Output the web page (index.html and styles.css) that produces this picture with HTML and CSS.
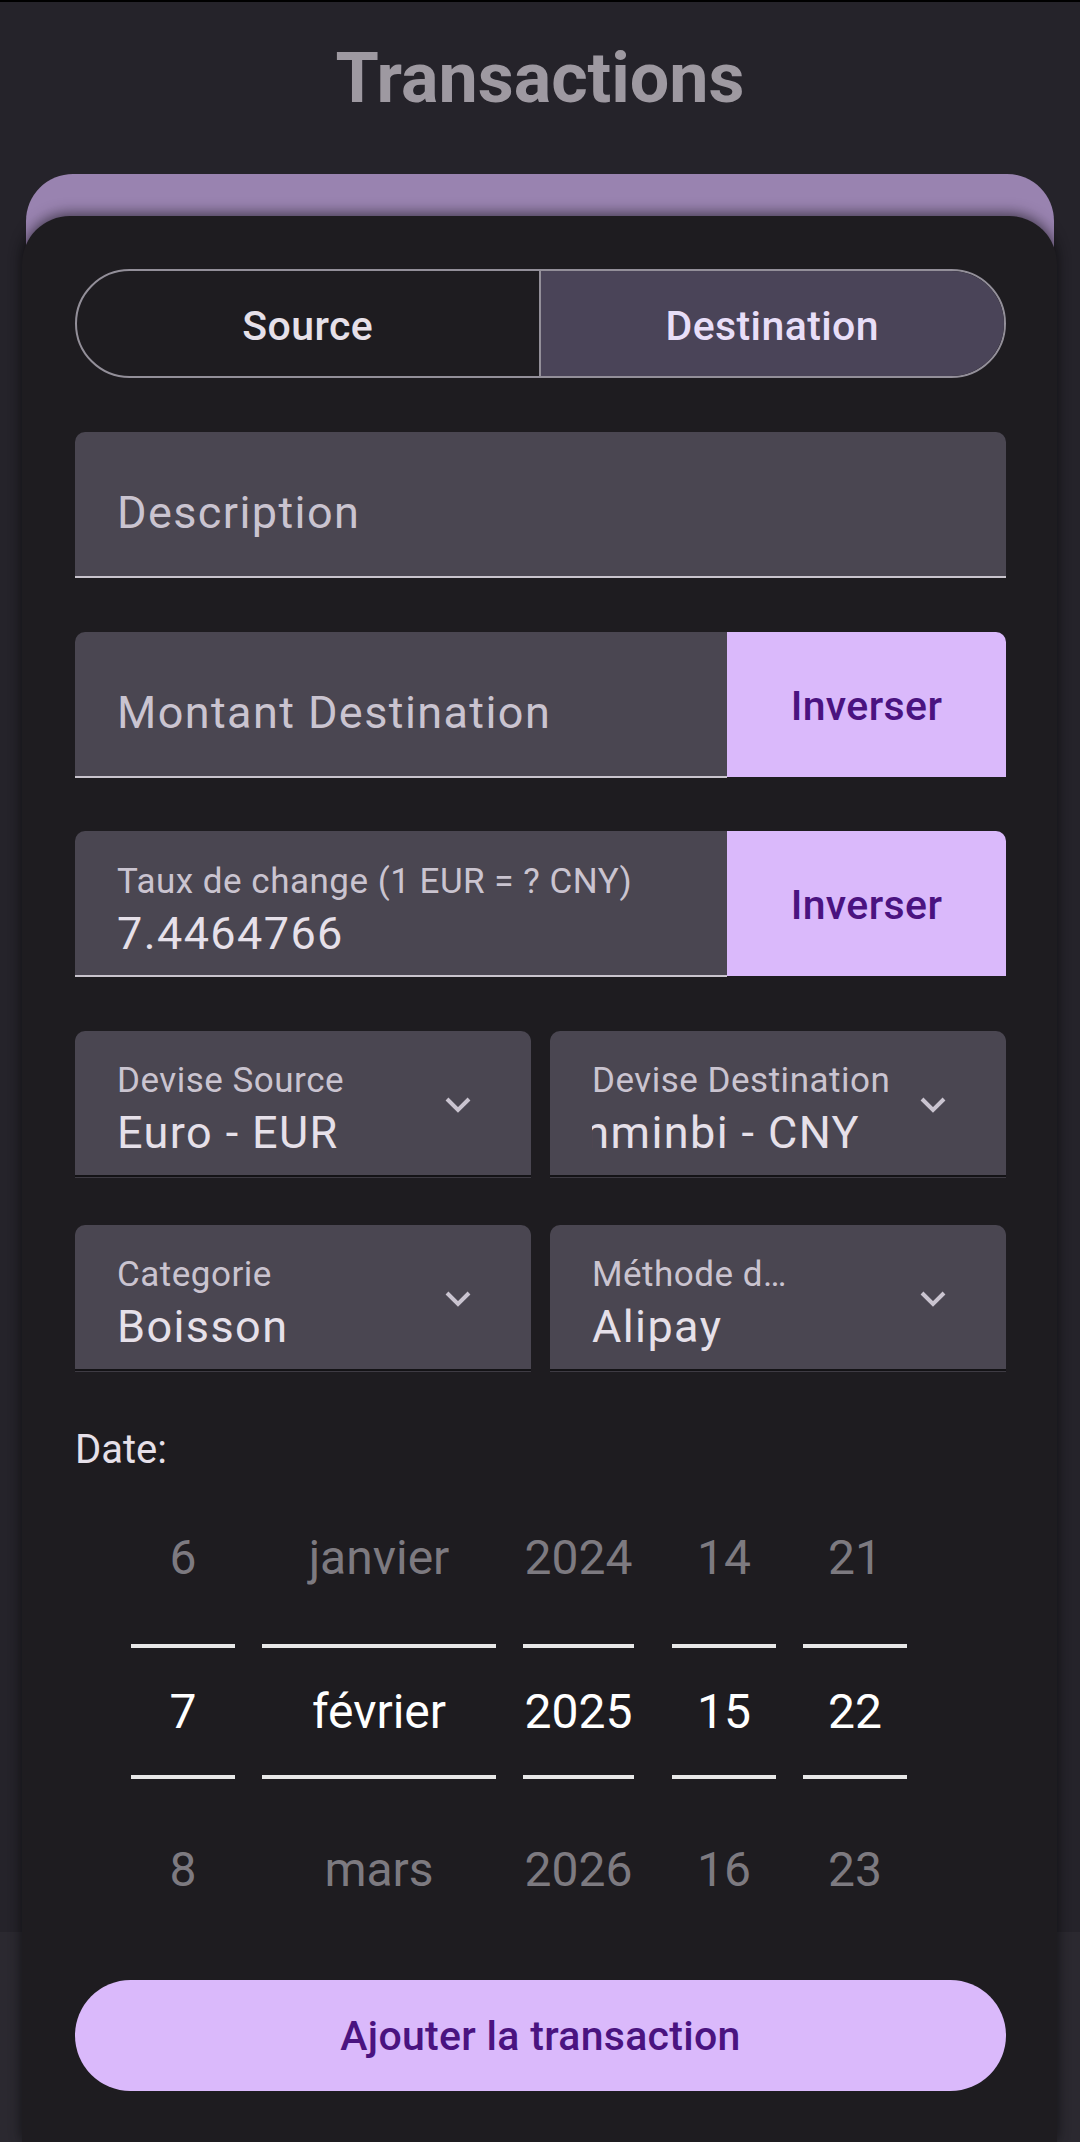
FILE: index.html
```html
<!DOCTYPE html>
<html lang="fr">
<head>
<meta charset="utf-8">
<title>Transactions</title>
<link rel="stylesheet" href="styles.css">
</head>
<body>
<div class="screen">
  <div class="statusbar"></div>
  <h1 class="title">Transactions</h1>
  <div class="backcard"></div>
  <div class="navbar"></div>

  <section class="sheet">
    <div class="segmented">
      <div class="seg seg-off">Source</div>
      <div class="seg seg-on">Destination</div>
    </div>

    <div class="field field-plain gap-54"><span class="placeholder">Description</span></div>

    <div class="row gap-54">
      <div class="field field-plain grow joined"><span class="placeholder">Montant Destination</span></div>
      <div class="invert">Inverser</div>
    </div>

    <div class="row gap-53">
      <div class="field field-float grow joined">
        <span class="label">Taux de change (1 EUR = ? CNY)</span>
        <span class="value">7.4464766</span>
      </div>
      <div class="invert">Inverser</div>
    </div>

    <div class="pair gap-54">
      <div class="select">
        <div class="select-text">
          <span class="label">Devise Source</span>
          <span class="value">Euro - EUR</span>
        </div>
        <svg class="chevron" viewBox="0 0 26 16" width="26" height="16"><path d="M2 2 L13 13 L24 2" fill="none" stroke="#cac4d0" stroke-width="4"/></svg>
      </div>
      <div class="select">
        <div class="select-text">
          <span class="label">Devise Destination</span>
          <span class="value value-clip"><span>Yuan Renminbi - CNY</span></span>
        </div>
        <svg class="chevron" viewBox="0 0 26 16" width="26" height="16"><path d="M2 2 L13 13 L24 2" fill="none" stroke="#cac4d0" stroke-width="4"/></svg>
      </div>
    </div>

    <div class="pair gap-48">
      <div class="select">
        <div class="select-text">
          <span class="label">Categorie</span>
          <span class="value">Boisson</span>
        </div>
        <svg class="chevron" viewBox="0 0 26 16" width="26" height="16"><path d="M2 2 L13 13 L24 2" fill="none" stroke="#cac4d0" stroke-width="4"/></svg>
      </div>
      <div class="select">
        <div class="select-text">
          <span class="label">Méthode d…</span>
          <span class="value">Alipay</span>
        </div>
        <svg class="chevron" viewBox="0 0 26 16" width="26" height="16"><path d="M2 2 L13 13 L24 2" fill="none" stroke="#cac4d0" stroke-width="4"/></svg>
      </div>
    </div>

    <div class="date-label">Date:</div>

    <div class="picker">
      <div class="col col-day">
        <div class="item">6</div>
        <div class="item sel">7</div>
        <div class="item">8</div>
      </div>
      <div class="col col-month">
        <div class="item">janvier</div>
        <div class="item sel">février</div>
        <div class="item">mars</div>
      </div>
      <div class="col col-year">
        <div class="item">2024</div>
        <div class="item sel">2025</div>
        <div class="item">2026</div>
      </div>
      <div class="col col-hour">
        <div class="item">14</div>
        <div class="item sel">15</div>
        <div class="item">16</div>
      </div>
      <div class="col col-min">
        <div class="item">21</div>
        <div class="item sel">22</div>
        <div class="item">23</div>
      </div>
    </div>

    <div class="submit">Ajouter la transaction</div>
  </section>
</div>
</body>
</html>
```

FILE: styles.css
```css
* { box-sizing: border-box; }

html, body {
  margin: 0;
  padding: 0;
  background: #25232a;
  font-family: Roboto, "Noto Sans", "Liberation Sans", sans-serif;
}

.screen {
  position: relative;
  width: 1080px;
  height: 2142px;
  overflow: hidden;
  display: flex;
  flex-direction: column;
  background: #25232a;
}

.statusbar {
  height: 2px;
  background: #000;
  flex: none;
}

.title {
  margin: 35px 0 0;
  height: 82px;
  line-height: 82px;
  font-size: 70px;
  font-weight: 700;
  text-align: center;
  color: #9e99a1;
  flex: none;
}

.backcard {
  margin: 55px 26px 0 26px;
  flex: 1;
  background: #9983b0;
  border-radius: 47px 47px 0 0;
}

.navbar {
  height: 210px;
  flex: none;
  background: #2b2930;
}

.sheet {
  position: absolute;
  top: 216px;
  left: 22px;
  width: 1035px;
  bottom: 0;
  background: #1e1c20;
  border-radius: 48px 48px 0 0;
  box-shadow: 0 -4px 14px rgba(0, 0, 0, 0.35), 0 0 12px rgba(0, 0, 0, 0.3);
  padding: 53px 51px 0 53px;
  display: flex;
  flex-direction: column;
}

/* segmented button */
.segmented {
  height: 109px;
  display: grid;
  grid-template-columns: 1fr 1fr;
  border: 2px solid #938f99;
  border-radius: 55px;
  overflow: hidden;
  flex: none;
}

.seg {
  display: flex;
  align-items: center;
  justify-content: center;
  font-size: 41px;
  font-weight: 500;
  letter-spacing: 0.4px;
  padding-top: 5px;
}

.seg-off {
  color: #e6e0e9;
  border-right: 2px solid #938f99;
}

.seg-on {
  background: #4a4458;
  color: #e8def8;
}

/* spacing helpers */
.gap-54 { margin-top: 54px; }
.gap-53 { margin-top: 53px; }
.gap-48 { margin-top: 48px; }

/* text fields */
.field {
  height: 146px;
  background: #4a4651;
  border-radius: 10px 10px 0 0;
  border-bottom: 2px solid #c9c4cd;
  padding-left: 42px;
  display: flex;
  flex-direction: column;
  flex: none;
}

.field-plain { padding-top: 55px; }
.field-float { padding-top: 31px; }

.placeholder {
  font-size: 45px;
  line-height: 52px;
  letter-spacing: 1.4px;
  color: #cac4d0;
  white-space: nowrap;
}

.label {
  font-size: 35px;
  line-height: 40px;
  letter-spacing: 0.5px;
  color: #cac4d0;
  white-space: nowrap;
}

.value {
  margin-top: 6px;
  font-size: 45px;
  line-height: 52px;
  letter-spacing: 1.4px;
  color: #e6e0e9;
  white-space: nowrap;
}

.row {
  display: flex;
  height: 146px;
  flex: none;
}

.grow { flex: 1; }

.joined { border-radius: 10px 0 0 0; }

.invert {
  width: 279px;
  height: 145px;
  background: #dab9fb;
  border-radius: 0 10px 0 0;
  display: flex;
  align-items: center;
  justify-content: center;
  color: #4a1380;
  font-size: 41px;
  font-weight: 500;
  letter-spacing: 0.4px;
  padding-top: 2px;
  flex: none;
}

/* selects */
.pair {
  display: grid;
  grid-template-columns: 1fr 1fr;
  column-gap: 19px;
  flex: none;
}

.select {
  height: 146px;
  background: #4a4651;
  border-radius: 10px 10px 0 0;
  border-bottom: 2px solid #141316;
  box-shadow: 0 1px 0 #3e3b43;
  padding-left: 42px;
  display: flex;
  align-items: center;
}

.select-text {
  flex: 1;
  min-width: 0;
  align-self: stretch;
  padding-top: 30px;
  display: flex;
  flex-direction: column;
}

.value-clip {
  width: 268px;
  overflow: hidden;
  display: flex;
  justify-content: flex-end;
}

.chevron {
  flex: none;
  margin: 4px 60px 0 10px;
}

/* date */
.date-label {
  margin-top: 55px;
  font-size: 40px;
  line-height: 47px;
  color: #e6e0e9;
  flex: none;
}

.picker {
  margin-top: 6px;
  padding-left: 56px;
  display: flex;
  column-gap: 27px;
  flex: none;
}

.col {
  display: flex;
  flex-direction: column;
}

.col-day { width: 104px; }
.col-month { width: 234px; }
.col-year { width: 111px; }
.col-hour { width: 104px; margin-left: 11px; }
.col-min { width: 104px; }

.item {
  height: 156px;
  display: flex;
  align-items: center;
  justify-content: center;
  font-size: 48px;
  color: #7d7a80;
  white-space: nowrap;
}

.item.sel {
  height: 135px;
  margin: 9px 0 12px;
  border-top: 4px solid #e8e8e8;
  border-bottom: 4px solid #e8e8e8;
  color: #ffffff;
}

/* submit */
.submit {
  margin-top: 33px;
  height: 111px;
  border-radius: 56px;
  background: #dab9fb;
  color: #4a1380;
  display: flex;
  align-items: center;
  justify-content: center;
  font-size: 41px;
  font-weight: 500;
  letter-spacing: 0.3px;
  flex: none;
}
```
